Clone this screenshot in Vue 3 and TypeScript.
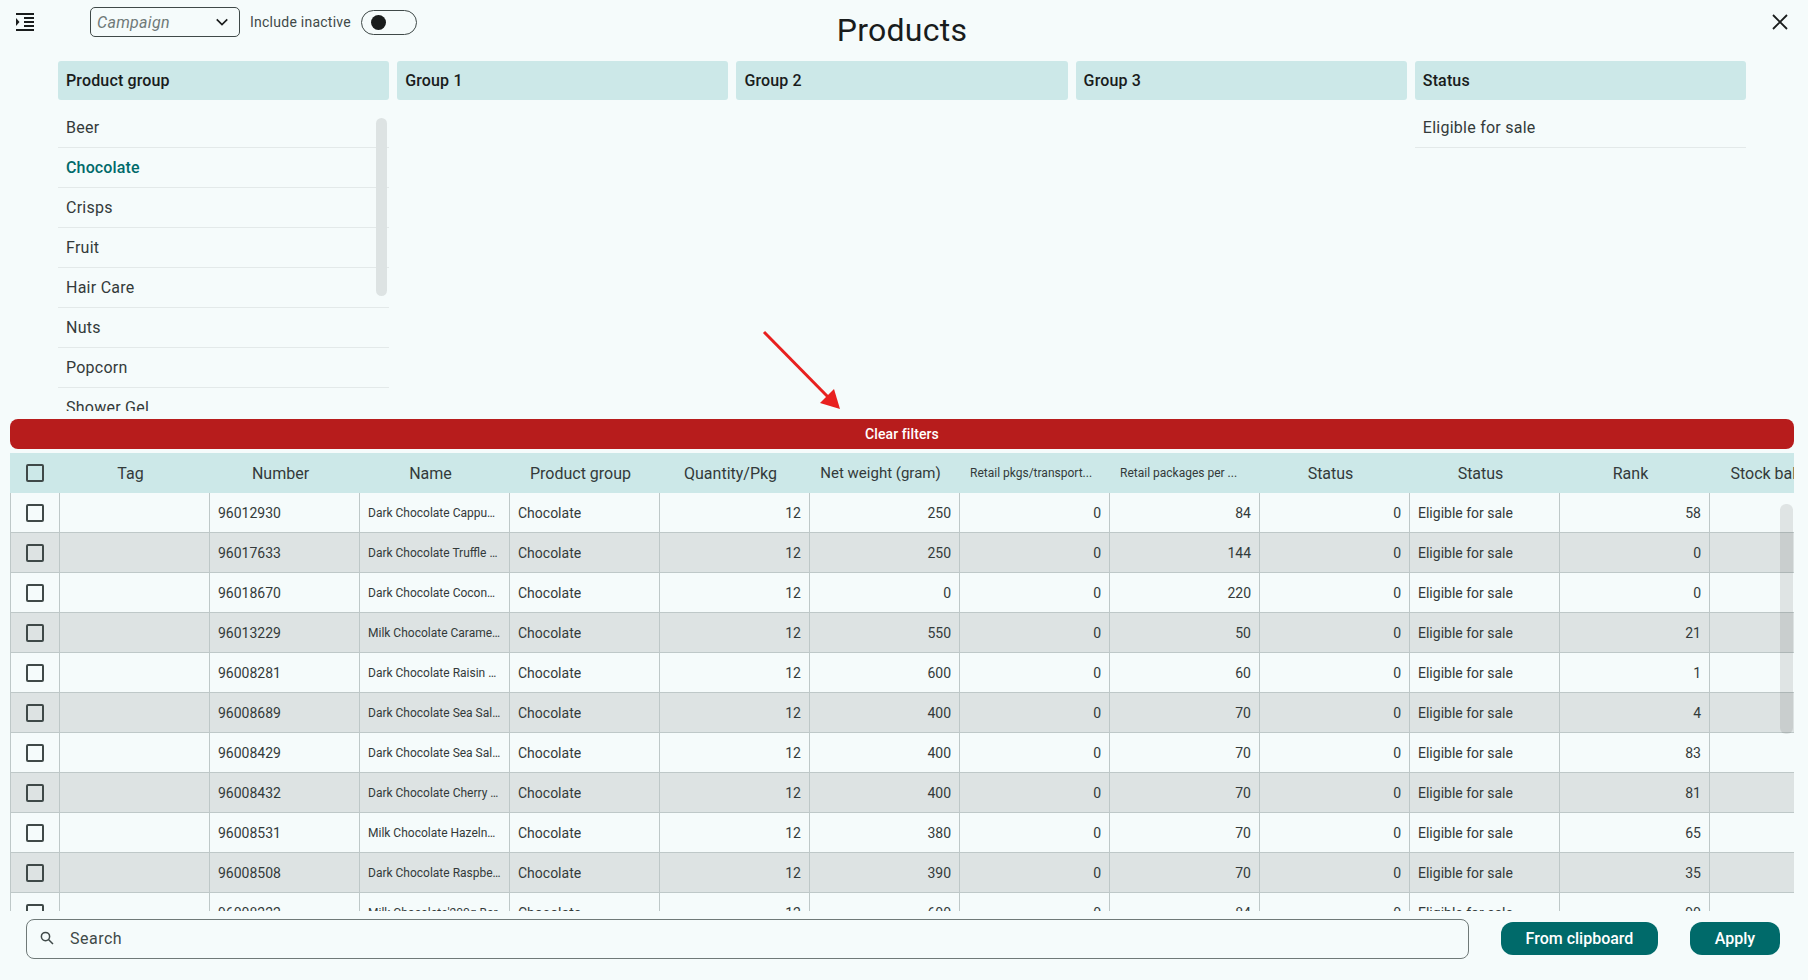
<script setup lang="ts">
const filterColumns: { title: string; items: string[]; scroll?: boolean }[] = [
  { title: 'Product group', items: ['Beer', 'Chocolate', 'Crisps', 'Fruit', 'Hair Care', 'Nuts', 'Popcorn', 'Shower Gel'], scroll: true },
  { title: 'Group 1', items: [] },
  { title: 'Group 2', items: [] },
  { title: 'Group 3', items: [] },
  { title: 'Status', items: ['Eligible for sale'] },
]
const headers = ['Tag', 'Number', 'Name', 'Product group', 'Quantity/Pkg', 'Net weight (gram)', 'Retail pkgs/transport...', 'Retail packages per ...', 'Status', 'Status', 'Rank', 'Stock balance']
const rows: [string, string, number, number, number, number][] = [
  ['96012930', 'Dark Chocolate Cappuccino 250g', 250, 84, 58, 0],
  ['96017633', 'Dark Chocolate Truffle Crunch', 250, 144, 0, 0],
  ['96018670', 'Dark Chocolate Coconut 200g', 0, 220, 0, 0],
  ['96013229', 'Milk Chocolate Caramel Bar', 550, 50, 21, 0],
  ['96008281', 'Dark Chocolate Raisin Almond', 600, 60, 1, 0],
  ['96008689', 'Dark Chocolate Sea Salt 400g', 400, 70, 4, 0],
  ['96008429', 'Dark Chocolate Sea Salt Bar', 400, 70, 83, 0],
  ['96008432', 'Dark Chocolate Cherry Bar', 400, 70, 81, 0],
  ['96008531', 'Milk Chocolate Hazelnut Bar', 380, 70, 65, 0],
  ['96008508', 'Dark Chocolate Raspberry Bar', 390, 70, 35, 0],
  ['96008222', "Milk Chocolate'200g Bar", 600, 84, 90, 0],
]
</script>

<template>
  <div class="page">
    <header class="top">
      <button class="icon-btn menu" aria-label="Menu">
        <svg width="24" height="24" viewBox="0 0 24 24"><path d="M3 3h18v2H3zM11 7h10v2H11zM11 11h10v2H11zM11 15h10v2H11zM3 19h18v2H3zM3 8l3.5 4L3 16z" fill="#191c1c" /></svg>
      </button>
      <div class="campaign">
        <span>Campaign</span>
        <svg width="18" height="18" viewBox="0 0 24 24"><path d="M5 8.5l7 7 7-7" fill="none" stroke="#191c1c" stroke-width="2.2" /></svg>
      </div>
      <span class="inactive">Include inactive</span>
      <div class="toggle"><i></i></div>
      <h1>Products</h1>
      <button class="icon-btn close" aria-label="Close">
        <svg width="24" height="24" viewBox="0 0 24 24"><path d="M5 5l14 14M19 5L5 19" fill="none" stroke="#191c1c" stroke-width="1.8" /></svg>
      </button>
    </header>

    <section class="filters">
      <div v-for="col in filterColumns" :key="col.title" class="filter-col">
        <div class="filter-head">{{ col.title }}</div>
        <div class="filter-list">
          <div v-for="item in col.items" :key="item" class="filter-item" :class="{ active: item === 'Chocolate' }">{{ item }}</div>
          <div v-if="col.scroll" class="list-thumb"></div>
        </div>
      </div>
      <svg class="arrow" width="90" height="90" viewBox="0 0 90 90">
        <path d="M3 4L69 71" stroke="#e8201f" stroke-width="3" fill="none" />
        <path d="M79 81L59 75L73 61z" fill="#e8201f" />
      </svg>
    </section>

    <button class="clear">Clear filters</button>

    <div class="table">
      <div class="tr head">
        <div class="td check"><span class="box"></span></div>
        <div v-for="(h, i) in headers" :key="i" class="td" :class="{ small: i === 6 || i === 7, mid: i === 5 }"><span class="clip">{{ h }}</span></div>
      </div>
      <div class="body">
        <div v-for="r in rows" :key="r[0]" class="tr">
          <div class="td check"><span class="box"></span></div>
          <div class="td"></div>
          <div class="td">{{ r[0] }}</div>
          <div class="td name"><span class="clip">{{ r[1] }}</span></div>
          <div class="td">Chocolate</div>
          <div class="td num">12</div>
          <div class="td num">{{ r[2] }}</div>
          <div class="td num">0</div>
          <div class="td num">{{ r[3] }}</div>
          <div class="td num">{{ r[5] }}</div>
          <div class="td">Eligible for sale</div>
          <div class="td num">{{ r[4] }}</div>
          <div class="td"></div>
        </div>
      </div>
      <div class="table-thumb"></div>
    </div>

    <footer class="bottom">
      <label class="search">
        <svg width="18" height="18" viewBox="0 0 24 24"><circle cx="10" cy="10" r="5.5" fill="none" stroke="#3f4948" stroke-width="2" /><path d="M14 14l6 6" stroke="#3f4948" stroke-width="2" /></svg>
        <span>Search</span>
      </label>
      <button class="btn clip-btn">From clipboard</button>
      <button class="btn apply">Apply</button>
    </footer>
  </div>
</template>

<style>
html, body { margin: 0; background: #f5fbfb; }
</style>

<style scoped>
.page { width: 1808px; height: 980px; overflow: hidden; background: #f5fbfb; color: #191c1c; font-family: Roboto, "Liberation Sans", sans-serif; display: flex; flex-direction: column; }
button { font-family: inherit; border: 0; background: none; padding: 0; }
.top { height: 61px; position: relative; display: flex; align-items: flex-start; flex: none; }
.icon-btn { display: flex; }
.menu { margin: 10px 0 0 13px; }
.campaign { margin: 7px 0 0 53px; height: 28px; border: 1px solid #3f4948; border-radius: 5px; display: flex; align-items: center; justify-content: space-between; padding: 0 8px 0 6px; font-style: italic; font-size: 16px; color: #6f7978; box-sizing: content-box; width: 134px; letter-spacing: .3px; }
.inactive { margin: 14px 0 0 10px; font-size: 14px; color: #3f4948; letter-spacing: .25px; }
.toggle { margin: 10px 0 0 10px; width: 54px; height: 23px; border: 1px solid #3f4948; border-radius: 13px; position: relative; }
.toggle i { position: absolute; left: 9px; top: 4px; width: 15px; height: 15px; border-radius: 50%; background: #191c1c; }
h1 { position: absolute; left: 0; right: 4px; top: 11px; margin: 0; text-align: center; font-size: 32px; line-height: 38px; font-weight: 400; letter-spacing: .25px; }
.close { position: absolute; right: 16px; top: 10px; }
.filters { flex: none; height: 358px; margin: 0 62px 0 58px; display: grid; grid-template-columns: repeat(5, 1fr); gap: 8px; position: relative; }
.filter-col { min-width: 0; }
.filter-head { height: 39px; background: #cce8e8; border-radius: 3px; padding-left: 8px; display: flex; align-items: center; font-size: 16px; font-weight: 500; letter-spacing: .15px; }
.filter-list { height: 303px; margin-top: 8px; overflow: hidden; position: relative; }
.filter-item { height: 39px; border-bottom: 1px solid #e3e9e9; padding-left: 8px; display: flex; align-items: center; font-size: 16px; letter-spacing: .25px; color: #333a3a; }
.filter-item.active { color: #006a6a; font-weight: 500; letter-spacing: .15px; }
.list-thumb { position: absolute; right: 2px; top: 10px; width: 11px; height: 178px; border-radius: 6px; background: #dde3e3; }
.arrow { position: absolute; left: 703px; top: 267px; }
.clear { flex: none; margin: 0 14px 0 10px; height: 30px; border-radius: 8px; background: #b71c1c; color: #fff; font-size: 14px; font-weight: 500; letter-spacing: .1px; }
.table { flex: none; margin: 4px 14px 0 10px; height: 458px; overflow: hidden; position: relative; }
.tr { display: flex; height: 40px; box-sizing: border-box; border-bottom: 1px solid #bec8c8; }
.body .tr:nth-child(even) { background: #dde3e3; }
.tr.head { background: #cce8e8; border-bottom: 0; font-size: 16px; color: #333a3a; }
.td { flex: none; width: 150px; box-sizing: border-box; border-right: 1px solid #bec8c8; padding: 0 8px; display: flex; align-items: center; font-size: 14px; color: #333a3a; min-width: 0; }
.td.check { width: 50px; padding: 0; justify-content: center; border-left: 1px solid #bec8c8; }
.td.num { justify-content: flex-end; }
.td.name { font-size: 12px; }
.clip { display: block; overflow: hidden; white-space: nowrap; text-overflow: ellipsis; width: 100%; }
.head .td { border: 0; padding: 0 9px 0 0; text-align: center; font-size: 16px; }
.head .td.check { padding: 0; }
.head .td.mid { font-size: 15px; }
.head .td.small { font-size: 12px; padding: 0 13px 0 10px; text-align: left; }
.box { width: 14px; height: 14px; border: 2px solid #3f4948; border-radius: 2px; }
.table-thumb { position: absolute; right: 1px; top: 51px; width: 13px; height: 230px; border-radius: 6px; background: rgba(25, 28, 28, .1); }
.bottom { flex: none; display: flex; align-items: center; height: 40px; margin-top: 8px; padding-left: 26px; }
.search { width: 1430px; height: 36px; padding: 0 0 2px 11px; border: 1px solid #6f7978; border-radius: 8px; display: flex; align-items: center; gap: 14px; font-size: 16px; letter-spacing: .5px; color: #3f4948; }
.btn { height: 33px; margin-bottom: 2px; border-radius: 12px; background: #006a6a; color: #fff; font-size: 16px; font-weight: 500; }
.clip-btn { width: 157px; margin-left: 32px; }
.apply { width: 90px; margin-left: 32px; }
</style>
